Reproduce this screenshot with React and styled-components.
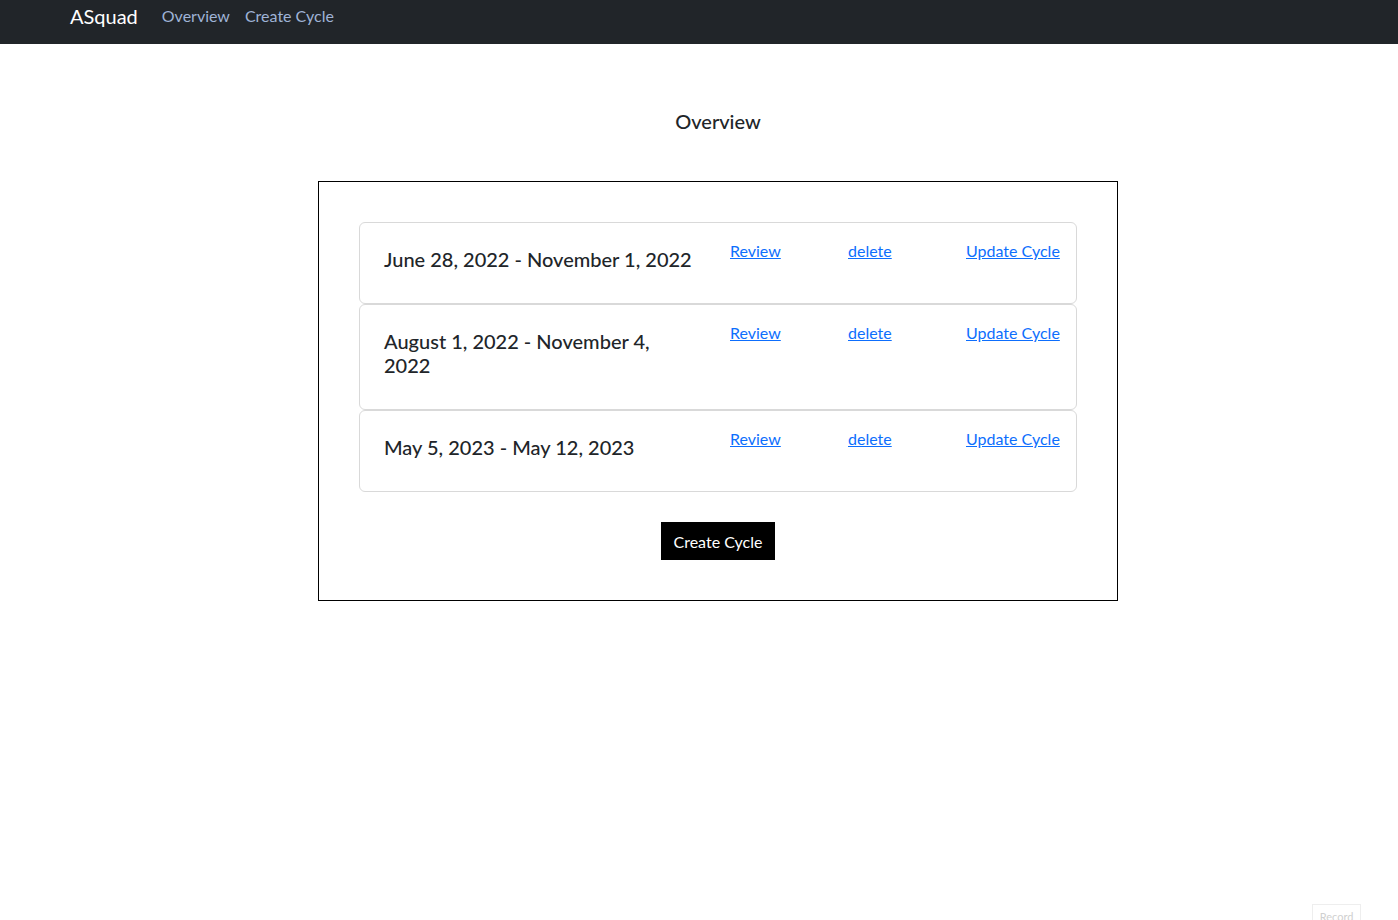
import React from 'react';
import styled, { createGlobalStyle } from 'styled-components';

const GlobalStyle = createGlobalStyle`
  body {
    margin: 0;
    font-family: Lato, 'Liberation Sans', sans-serif;
    font-size: 16px;
    line-height: 1.5;
    color: #212529;
    background: #ffffff;
  }
  * { box-sizing: border-box; }
`;

const NavBar = styled.nav`
  height: 44px;
  background: #212529;
  display: flex;
  align-items: flex-start;
  padding: 4px 0 0 70px;
`;

const Brand = styled.a`
  color: #ffffff;
  font-size: 20px;
  line-height: 24px;
  margin-right: 24px;
  text-decoration: none;
`;

const NavLinks = styled.div`
  display: flex;
  gap: 15px;
  padding-top: 1px;
`;

const NavLink = styled.a`
  color: #9fb3d6;
  font-size: 16px;
  line-height: 22px;
  text-decoration: none;
`;

const Main = styled.main`
  display: flex;
  flex-direction: column;
  align-items: center;
  padding: 65px 0 0 38px;
`;

const Heading = styled.h2`
  margin: 0 0 48px;
  font-size: 20px;
  line-height: 24px;
  font-weight: 500;
`;

const Box = styled.section`
  width: 800px;
  border: 1px solid #000000;
  padding: 40px;
  display: flex;
  flex-direction: column;
  align-items: center;
`;

const CardList = styled.div`
  width: 718px;
  display: flex;
  flex-direction: column;
`;

const Card = styled.div`
  border: 1px solid #d9d9d9;
  border-radius: 6px;
  padding: 16px 16px 16px 24px;
  display: grid;
  grid-template-columns: 346px 118px 118px 1fr;
  align-items: start;
`;

const DateRange = styled.h5`
  margin: 8px 0 16px;
  font-size: 20px;
  line-height: 24px;
  height: auto;
  font-weight: 500;
  padding-right: 30px;
`;

const ActionLink = styled.a`
  color: #0d6efd;
  text-decoration: underline;
  font-size: 16px;
  line-height: 24px;
  cursor: pointer;
`;

const CreateButton = styled.button`
  margin-top: 30px;
  height: 38px;
  padding: 0 13px;
  background: #000000;
  color: #ffffff;
  border: none;
  font-family: inherit;
  font-size: 16px;
`;

const RecordButton = styled.button`
  position: fixed;
  right: 37px;
  bottom: -8px;
  width: 49px;
  height: 24px;
  padding: 0;
  background: #ffffff;
  border: 1px solid #eeeeee;
  color: #d0d0d0;
  font-family: inherit;
  font-size: 11px;
`;

const cycles = [
  'June 28, 2022 - November 1, 2022',
  'August 1, 2022 - November 4, 2022',
  'May 5, 2023 - May 12, 2023',
];

export default function App() {
  return (
    <>
      <GlobalStyle />
      <NavBar>
        <Brand>ASquad</Brand>
        <NavLinks>
          <NavLink>Overview</NavLink>
          <NavLink>Create Cycle</NavLink>
        </NavLinks>
      </NavBar>
      <Main>
        <Heading>Overview</Heading>
        <Box>
          <CardList>
            {cycles.map((c) => (
              <Card key={c}>
                <DateRange>{c}</DateRange>
                <ActionLink>Review</ActionLink>
                <ActionLink>delete</ActionLink>
                <ActionLink>Update Cycle</ActionLink>
              </Card>
            ))}
          </CardList>
          <CreateButton>Create Cycle</CreateButton>
        </Box>
      </Main>
      <RecordButton>Record</RecordButton>
    </>
  );
}
